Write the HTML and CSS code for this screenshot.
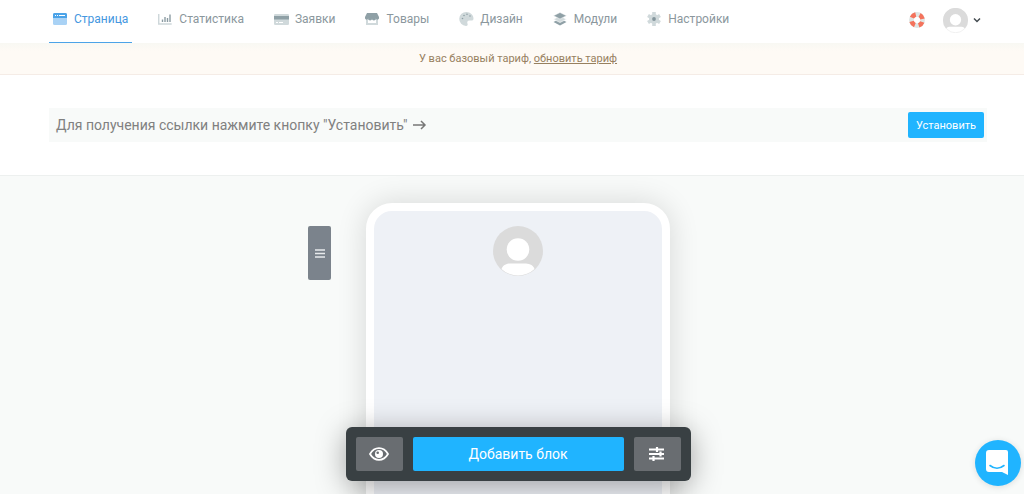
FILE: index.html
```html
<!DOCTYPE html>
<html lang="ru">
<head>
<meta charset="utf-8">
<meta name="viewport" content="width=device-width, initial-scale=1">
<title>Страница</title>
<link rel="stylesheet" href="styles.css">
</head>
<body>
<header class="header">
  <nav class="nav">
    <a class="nav-link active" href="#">
      <svg class="nav-icon" viewBox="0 0 16 16"><rect x="0" y="2" width="14" height="12" rx="1.500" fill="#a9d2f5"/><path d="M1.500 2h11A1.500 1.500 0 0 1 14 3.500V7H0V3.500A1.500 1.500 0 0 1 1.500 2z" fill="#4ba3e8"/><path d="M2 4h1v1H2zM4 4h1v1H4zM6 4h6v1H6z" fill="#fff"/></svg>
      <span>Страница</span></a>
    <a class="nav-link" href="#">
      <svg class="nav-icon" viewBox="0 0 16 16"><path d="M.7 3v10h13" fill="none" stroke="#ced7da" stroke-width="1.500"/><path d="M4.500 11V8.500M7 11V6M9.500 11V7M12 11V3.500" fill="none" stroke="#8c9ca3" stroke-width="1.400"/></svg>
      <span>Статистика</span></a>
    <a class="nav-link" href="#">
      <svg class="nav-icon" viewBox="0 0 16 16"><rect x="0" y="3" width="15" height="11" rx="1.200" fill="#d0d9db"/><path d="M0 5h15v3.500H0z" fill="#8fa0a6"/><path d="M2 11h2v1H2zM5 11h4v1H5z" fill="#fff"/></svg>
      <span>Заявки</span></a>
    <a class="nav-link" href="#">
      <svg class="nav-icon" viewBox="0 0 16 16"><path d="M1 7h12v7H1z" fill="#d0d9db"/><path d="M3 9h8v3H3z" fill="#fff"/><path d="M2 2h10l2 4v1.500a1.700 1.700 0 0 1-3.200 0 1.900 1.900 0 0 1-3.800 0 1.900 1.900 0 0 1-3.800 0A1.700 1.700 0 0 1 0 7.500V6z" fill="#8fa0a6"/></svg>
      <span>Товары</span></a>
    <a class="nav-link" href="#">
      <svg class="nav-icon" viewBox="0 0 16 16"><path d="M7.500 1A7 7 0 0 0 7 15c1.600 0 2-1 1.500-2.200C7.800 11 8.500 9.500 10.500 9.500h2c1.300 0 2-.7 2-1.800C14.500 4 11.300 1 7.500 1z" fill="#d0d9db"/><g fill="#8fa0a6"><circle cx="3.500" cy="7.500" r=".8"/><circle cx="5" cy="4.500" r=".8"/><circle cx="8" cy="3.300" r=".8"/><circle cx="11" cy="5" r=".8"/></g></svg>
      <span>Дизайн</span></a>
    <a class="nav-link" href="#">
      <svg class="nav-icon" viewBox="0 0 16 16"><path d="M7 7.500l6.500 3.500L7 14.500.5 11z" fill="#8fa0a6"/><path d="M7 5l6.500 3.200L7 11.500.5 8.200z" fill="#d0d9db" stroke="#fff" stroke-width=".6"/><path d="M7 1.500L13.500 4.700 7 8 .5 4.700z" fill="#8fa0a6" stroke="#fff" stroke-width=".5"/></svg>
      <span>Модули</span></a>
    <a class="nav-link" href="#">
      <svg class="nav-icon" viewBox="0 0 16 16"><circle cx="7" cy="8" r="5" fill="#d0d9db"/><path d="M7 1v14M1 4.500l12 7M13 4.500l-12 7" stroke="#d0d9db" stroke-width="3.600"/><circle cx="7" cy="8" r="1.900" fill="#84959c"/></svg>
      <span>Настройки</span></a>
  </nav>
  <div class="account">
    <button aria-label="Помощь"><svg class="help-icon" viewBox="0 0 16 16"><circle cx="8" cy="8" r="5.600" fill="none" stroke="#dfe5e3" stroke-width="4.600"/><circle cx="8" cy="8" r="5.600" fill="none" stroke="#f4735c" stroke-width="4.600" stroke-dasharray="4.800 3.996" stroke-dashoffset="-2"/></svg></button>
    <button class="profile" aria-label="Профиль">
      <svg class="avatar-small" viewBox="0 0 50 50"><circle cx="25" cy="25" r="24.500" fill="#fff" stroke="#e2e2e2"/><path d="M6 41a25 25 0 1 1 38 0c-3-3-6-3.500-9-3.500H15c-3 0-6 .5-9 3.500z" fill="#dbdbdb"/><circle cx="25" cy="23.500" r="11.300" fill="#fff"/></svg>
      <svg class="chevron" viewBox="0 0 8 8"><path d="M1 2.500l3 3 3-3" fill="none" stroke="#444b50" stroke-width="1.500"/></svg>
    </button>
  </div>
</header>
<div class="tariff"><p>У вас базовый тариф, <a href="#">обновить тариф</a></p></div>
<section class="publish">
  <div class="publish-bar">
    <p class="publish-text">Для получения ссылки нажмите кнопку "Установить"</p>
    <svg class="arrow" viewBox="0 0 14 12"><path d="M0 6h12M8 2l4 4-4 4" fill="none" stroke="#777" stroke-width="1.500"/></svg>
    <button class="primary install">Установить</button>
  </div>
</section>
<main class="stage">
  <button class="drag" aria-label="Переместить"><svg class="drag-icon" viewBox="0 0 10 9"><path d="M0 1h10M0 4.500h10M0 8h10" stroke="#e8eaec" stroke-width="1.700"/></svg></button>
  <div class="phone">
    <svg class="avatar" viewBox="0 0 50 50"><circle cx="25" cy="25" r="25" fill="#dbdbdb"/><circle cx="25" cy="23.500" r="11.300" fill="#fff"/><path d="M8.500 43c2-5 6-5.500 10-5.500h13c4 0 8 .5 10 5.500a24 24 0 0 1-33 0z" fill="#fff"/></svg>
  </div>
</main>
<div class="dock">
  <div class="toolbar">
    <button class="tool" aria-label="Просмотр"><svg class="eye" viewBox="0 0 20 14"><path d="M1 7c4.500-7.800 13.500-7.800 18 0-4.500 7.800-13.500 7.800-18 0z" fill="none" stroke="#fff" stroke-width="1.800"/><circle cx="10" cy="7" r="4" fill="#fff"/><circle cx="8.700" cy="5.700" r="1.300" fill="#696d71"/></svg></button>
    <button class="primary add">Добавить блок</button>
    <button class="tool" aria-label="Параметры"><svg class="sliders" viewBox="0 0 16 14"><path d="M0 2.500h15M0 7h15M0 11.500h15" fill="none" stroke="#fff" stroke-width="1.800"/><path d="M8 0v5M11.500 4.500v5M4.500 9v5" fill="none" stroke="#fff" stroke-width="2.200"/></svg></button>
  </div>
</div>
<button class="chat" aria-label="Чат"><svg class="chat-icon" viewBox="0 0 24 26"><path d="M3 0h17a2 2 0 0 1 2 2v23l-6-3H3a3 3 0 0 1-3-3V3a3 3 0 0 1 3-3z" fill="#fff"/><path d="M4 15.500c4.500 3.500 9.500 3.500 14 0" fill="none" stroke="#20b4ff" stroke-width="1.600" stroke-linecap="round"/></svg></button>
</body>
</html>
```
FILE: styles.css
```css
* {
  box-sizing: border-box;
}

body {
  margin: 0;
  height: 100vh;
  display: flex;
  flex-direction: column;
  overflow: hidden;
  background: #f8faf9;
  font-family: Roboto, sans-serif;
}

p {
  margin: 0;
}

svg {
  display: block;
  flex: none;
}

button {
  border: 0;
  padding: 0;
  background: none;
  font-family: inherit;
  cursor: pointer;
}

.header,
.tariff,
.publish,
.stage,
.dock {
  padding-left: 49px;
  padding-right: 37px;
}

.header {
  display: flex;
  justify-content: space-between;
  background: #fff;
}

.nav {
  display: flex;
  gap: 22px;
}

.nav-link {
  display: flex;
  align-items: center;
  gap: 5px;
  height: 43px;
  padding: 0 4px 4px;
  border-bottom: 1px solid transparent;
  color: #8b979d;
  font-size: 12px;
  text-decoration: none;
}

.nav-link.active {
  color: #4597e0;
  border-bottom-color: #4ba3e8;
}

.nav-icon {
  width: 16px;
  height: 16px;
}

.account {
  display: flex;
  align-items: center;
  gap: 18px;
  padding: 0 6px 3px 0;
}

.profile {
  display: flex;
  align-items: center;
  gap: 5px;
}

.help-icon {
  width: 16px;
  height: 16px;
}

.avatar-small {
  width: 25px;
  height: 25px;
}

.chevron {
  width: 8px;
  height: 8px;
}

.tariff {
  height: 32px;
  border-bottom: 1px solid #f5ece6;
  background: linear-gradient(#f8f8f3, #fefaf5 8px);
  color: #97805f;
  font-size: 11px;
  line-height: 31px;
  text-align: center;
}

.tariff a {
  color: inherit;
}

.publish {
  padding-top: 33px;
  padding-bottom: 33px;
  border-bottom: 1px solid #edf0ef;
  background: #fff;
}

.publish-bar {
  display: flex;
  align-items: center;
  height: 34px;
  padding: 0 3px 0 7px;
  background: #f8faf9;
  color: #808080;
}

.publish-text {
  font-size: 14px;
}

.arrow {
  width: 14px;
  height: 12px;
  margin-left: 6px;
}

.primary {
  border-radius: 2px;
  background: #20b4ff;
  color: #fff;
}

.install {
  height: 26px;
  margin-left: auto;
  padding: 0 8px;
  font-size: 11px;
}

.stage {
  flex: 1;
  min-height: 0;
  display: grid;
  grid-template-columns: 1fr 304px 1fr;
  column-gap: 35px;
  align-items: start;
  padding-top: 27px;
  overflow: hidden;
}

.drag {
  display: grid;
  place-items: center;
  justify-self: end;
  width: 23px;
  height: 54px;
  margin-top: 23px;
  border-radius: 2px;
  background: #7b838c;
}

.drag-icon {
  width: 10px;
  height: 9px;
}

.phone {
  min-height: 560px;
  padding-top: 15px;
  border: 8px solid #fff;
  border-radius: 26px;
  background: #eef1f6;
  box-shadow: 0 0 30px rgba(0, 0, 0, 0.14);
}

.avatar {
  width: 50px;
  height: 50px;
  margin: 0 auto;
}

.dock {
  position: fixed;
  left: 0;
  right: 0;
  bottom: 13px;
  display: flex;
  justify-content: center;
}

.toolbar {
  display: flex;
  gap: 10px;
  padding: 10px;
  border-radius: 6px;
  background: #394043;
  box-shadow: 0 5px 30px rgba(0, 0, 0, 0.35);
}

.tool {
  display: grid;
  place-items: center;
  width: 47px;
  height: 34px;
  border-radius: 2px;
  background: #696d71;
}

.eye {
  width: 20px;
  height: 14px;
}

.sliders {
  width: 16px;
  height: 14px;
}

.add {
  width: 211px;
  font-size: 14px;
}

.chat {
  position: fixed;
  right: 3px;
  bottom: 8px;
  display: grid;
  place-items: center;
  width: 46px;
  height: 46px;
  border-radius: 50%;
  background: #20b4ff;
  box-shadow: 0 1px 6px rgba(0, 0, 0, 0.12);
}

.chat-icon {
  width: 24px;
  height: 26px;
}
```
